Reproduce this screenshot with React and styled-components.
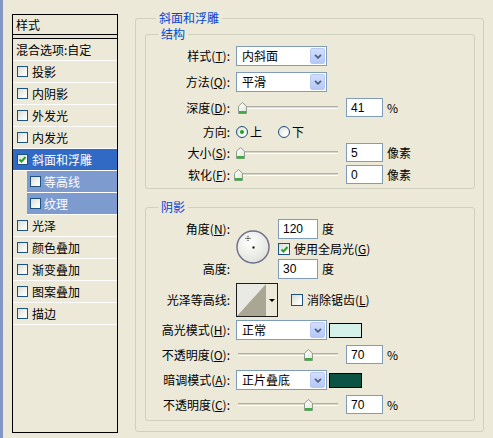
import React from "react";
import styled, { createGlobalStyle } from "styled-components";

const GlobalStyle = createGlobalStyle`
  html, body {
    margin: 0;
    padding: 0;
    background: #ECE9D8;
  }
  body {
    font-family: "Noto Sans CJK SC", "Liberation Sans", sans-serif;
    font-size: 12px;
    line-height: 14px;
    color: #000;
  }
`;

const Dialog = styled.div`
  display: flex;
  align-items: flex-start;
  width: 493px;
  height: 438px;
  box-sizing: border-box;
  border-left: 3px solid #8396C4;
  background: #ECE9D8;
  overflow: hidden;
`;

/* ---------- left style list ---------- */

const Sidebar = styled.div`
  margin: 14px 0 0 9px;
  width: 106px;
  height: 419px;
  box-sizing: border-box;
  border: 1px solid #000;
  display: flex;
  flex-direction: column;
  flex: none;
`;

const SideHeader = styled.div`
  height: 19px;
  line-height: 19px;
  padding-left: 3px;
  border-bottom: 1px solid #000;
`;

const SideGap = styled.div`
  height: 3px;
  background: #E4E1D2;
`;

const SideList = styled.div`
  flex: 1;
  border-top: 1px solid #000;
`;

const Item = styled.div`
  height: 21px;
  border-bottom: 1px solid #fff;
  display: flex;
  align-items: center;
  gap: ${p => (p.$sub ? 3 : 4)}px;
  margin-left: ${p => (p.$sub ? 14 : 0)}px;
  padding-left: ${p => (p.$sub ? 3 : p.$plain ? 3 : 4)}px;
  background: ${p => (p.$selected ? "#316AC5" : p.$sub ? "#7E9BD0" : "transparent")};
  color: ${p => (p.$selected || p.$sub ? "#fff" : "#000")};
  white-space: nowrap;
`;

const Check = styled.span`
  width: ${p => p.$size || 11}px;
  height: ${p => p.$size || 11}px;
  box-sizing: border-box;
  border: 1px solid #1C5180;
  background: linear-gradient(135deg, #DCDCD5 0%, #F4F4F0 60%, #fff 100%);
  display: inline-flex;
  align-items: center;
  justify-content: center;
  flex: none;
`;

function CheckBox({ checked, size }) {
  return (
    <Check $size={size}>
      {checked && (
        <svg width="9" height="9" viewBox="0 0 9 9">
          <polyline points="1.5,4.5 3.5,6.5 7.5,2" fill="none" stroke="#21A121" strokeWidth="2" />
        </svg>
      )}
    </Check>
  );
}

const styleItems = [
  { name: "投影" },
  { name: "内阴影" },
  { name: "外发光" },
  { name: "内发光" },
  { name: "斜面和浮雕", selected: true, checked: true },
  { name: "等高线", sub: true },
  { name: "纹理", sub: true },
  { name: "光泽" },
  { name: "颜色叠加" },
  { name: "渐变叠加" },
  { name: "图案叠加" },
  { name: "描边" },
];

/* ---------- right panel ---------- */

const Main = styled.div`
  margin: 11px 0 0 17px;
  flex: none;
`;

const Group = styled.fieldset`
  margin: ${p => p.$mt || 0}px 0 0 0;
  padding: ${p => p.$pad};
  width: ${p => p.$w}px;
  box-sizing: border-box;
  border: 1px solid #D0D0BF;
  border-radius: 3px;
  min-inline-size: 0;
`;

const Legend = styled.legend`
  margin-left: ${p => p.$ml}px;
  padding: 0 3px;
  color: #0046D5;
  font-size: 12px;
  line-height: 14px;
`;

const Row = styled.div`
  display: flex;
  align-items: center;
  height: ${p => p.$h || 19}px;
  margin-top: ${p => p.$mt || 0}px;
  white-space: nowrap;
`;

const Label = styled.span`
  width: 84px;
  flex: none;
  text-align: right;
  margin-right: 6px;
  white-space: nowrap;
`;

const Unit = styled.span`
  margin-left: 4px;
`;

const Combo = styled.div`
  width: 91px;
  height: ${p => p.$h || 20}px;
  box-sizing: border-box;
  border: 1px solid #7F9DB9;
  background: #fff;
  display: flex;
  align-items: stretch;
  padding: 1px;
  flex: none;
`;

const ComboText = styled.span`
  flex: 1;
  padding-left: 4px;
  display: flex;
  align-items: center;
`;

const DropBtn = styled.span`
  width: 15px;
  box-sizing: border-box;
  border: 1px solid #B7C9F2;
  border-radius: 2px;
  background: linear-gradient(#D2DEFD, #B5C8F7);
  display: flex;
  align-items: center;
  justify-content: center;
`;

function ComboBox({ value, h }) {
  return (
    <Combo $h={h}>
      <ComboText>{value}</ComboText>
      <DropBtn>
        <svg width="8" height="5" viewBox="0 0 8 5">
          <polyline points="1,0.8 4,3.8 7,0.8" fill="none" stroke="#4D6185" strokeWidth="1.8" />
        </svg>
      </DropBtn>
    </Combo>
  );
}

const Field = styled.span`
  width: ${p => p.$w || 37}px;
  height: ${p => p.$h || 19}px;
  box-sizing: border-box;
  border: 1px solid #7F9DB9;
  background: #fff;
  padding-left: 4px;
  display: flex;
  align-items: center;
  flex: none;
  font-family: "Liberation Sans", "Noto Sans CJK SC", sans-serif;
`;

const SliderBox = styled.div`
  position: relative;
  width: 109px;
  height: 14px;
  margin-left: -2px;
  margin-right: 3px;
  display: flex;
  align-items: center;
  flex: none;
`;

const Track = styled.div`
  flex: 1;
  margin: 0 5px 0 4px;
  height: 1px;
  border-top: 1px solid #B3B1A3;
  border-bottom: 1px solid #fff;
  background: #D8D6C8;
`;

const Thumb = styled.svg`
  position: absolute;
  top: 1px;
`;

function Slider({ pos }) {
  return (
    <SliderBox>
      <Track />
      <Thumb width="9" height="12" viewBox="0 0 9 12" style={{ left: `${pos}px` }}>
        <defs>
          <linearGradient id="thumbFill" x1="0" y1="0" x2="1" y2="1">
            <stop offset="0" stopColor="#fff" />
            <stop offset="1" stopColor="#E3E3DB" />
          </linearGradient>
        </defs>
        <path d="M0.5 11.5 V4.2 L4.5 0.5 L8.5 4.2 V11.5 Z" fill="url(#thumbFill)" stroke="#8F9C90" />
        <rect x="1" y="9" width="7" height="2.5" fill="#3DAE3D" />
      </Thumb>
    </SliderBox>
  );
}

const RadioDot = styled.span`
  width: 12px;
  height: 12px;
  box-sizing: border-box;
  border-radius: 50%;
  border: 1px solid #1C5180;
  background: radial-gradient(circle at 70% 70%, #fff 0%, #F0F0EA 50%, #D8D8D0 100%);
  display: inline-flex;
  align-items: center;
  justify-content: center;
  flex: none;
  &::after {
    content: "";
    width: 4px;
    height: 4px;
    border-radius: 50%;
    background: ${p => (p.$on ? "#21A121" : "transparent")};
  }
`;

const RadioOpt = styled.span`
  display: inline-flex;
  align-items: center;
  gap: 2px;
  margin-right: 16px;
`;

const AngleBlock = styled.div`
  display: flex;
  height: 60px;
`;

const AngleLabels = styled.div`
  width: 84px;
  display: flex;
  flex-direction: column;
  justify-content: space-between;
  text-align: right;
  flex: none;
`;

const AngleLabel = styled.span`
  height: 20px;
  line-height: 20px;
`;

const Dial = styled.svg`
  margin: 10px 0 0 5px;
  flex: none;
`;

const AngleFields = styled.div`
  margin-left: 7px;
  display: flex;
  flex-direction: column;
  justify-content: space-between;
`;

const Inline = styled.div`
  display: flex;
  align-items: center;
  gap: ${p => p.$gap || 0}px;
  white-space: nowrap;
`;

const Contour = styled.div`
  width: 42px;
  height: 34px;
  box-sizing: border-box;
  border: 1px solid #1E1E1E;
  display: flex;
  flex: none;
  background: #ECE9D8;
`;

const ContourArrow = styled.div`
  flex: 1;
  display: flex;
  align-items: center;
  justify-content: center;
  &::after {
    content: "";
    border-left: 3px solid transparent;
    border-right: 3px solid transparent;
    border-top: 3px solid #000;
  }
`;

const Swatch = styled.span`
  width: 33px;
  height: 15px;
  box-sizing: border-box;
  border: 1px solid #000;
  background: ${p => p.$color};
  margin-left: 2px;
  flex: none;
`;

function AngleDial({ angle }) {
  const rad = (angle * Math.PI) / 180;
  const cx = 18 + 10 * Math.cos(rad);
  const cy = 18 - 10 * Math.sin(rad);
  return (
    <Dial width="36" height="36" viewBox="0 0 36 36">
      <defs>
        <radialGradient id="dialFill" cx="40%" cy="35%" r="70%">
          <stop offset="0" stopColor="#fff" />
          <stop offset="1" stopColor="#E0E0DA" />
        </radialGradient>
      </defs>
      <circle cx="18" cy="18" r="16.8" fill="#D5D5DA" />
      <circle cx="18" cy="18" r="16" fill="url(#dialFill)" stroke="#6E7088" strokeWidth="1.4" />
      <rect x="17.5" y="17.5" width="2" height="2" fill="#000" />
      <line x1={cx - 2.5} y1={cy} x2={cx + 2.5} y2={cy} stroke="#000" strokeWidth="1" strokeDasharray="1 1" />
      <line x1={cx} y1={cy - 2.5} x2={cx} y2={cy + 2.5} stroke="#000" strokeWidth="1" strokeDasharray="1 1" />
    </Dial>
  );
}

export default function App() {
  return (
    <>
      <GlobalStyle />
      <Dialog>
        <Sidebar>
          <SideHeader>样式</SideHeader>
          <SideGap />
          <SideList>
            <Item $plain>混合选项:自定</Item>
            {styleItems.map(it => (
              <Item key={it.name} $selected={it.selected} $sub={it.sub}>
                <CheckBox checked={it.checked} />
                <span>{it.name}</span>
              </Item>
            ))}
          </SideList>
        </Sidebar>

        <Main>
          <Group $w={349} $pad="2px 8px 10px 9px">
            <Legend $ml={11}>斜面和浮雕</Legend>

            <Group $w={330} $pad="5px 0 4px 0">
              <Legend $ml={12}>结构</Legend>
              <Row $h={20}>
                <Label>样式(<u>T</u>):</Label>
                <ComboBox value="内斜面" />
              </Row>
              <Row $h={20} $mt={6}>
                <Label>方法(<u>Q</u>):</Label>
                <ComboBox value="平滑" />
              </Row>
              <Row $mt={6}>
                <Label>深度(<u>D</u>):</Label>
                <Slider pos={4} />
                <Field>41</Field>
                <Unit>%</Unit>
              </Row>
              <Row $h={18} $mt={6}>
                <Label>方向:</Label>
                <RadioOpt>
                  <RadioDot $on />
                  <span>上</span>
                </RadioOpt>
                <RadioOpt>
                  <RadioDot />
                  <span>下</span>
                </RadioOpt>
              </Row>
              <Row $mt={2}>
                <Label>大小(<u>S</u>):</Label>
                <Slider pos={2} />
                <Field>5</Field>
                <Unit>像素</Unit>
              </Row>
              <Row $mt={3}>
                <Label>软化(<u>F</u>):</Label>
                <Slider pos={0} />
                <Field>0</Field>
                <Unit>像素</Unit>
              </Row>
            </Group>

            <Group $w={330} $mt={11} $pad="5px 0 6px 0">
              <Legend $ml={12}>阴影</Legend>
              <AngleBlock>
                <AngleLabels>
                  <AngleLabel>角度(<u>N</u>):</AngleLabel>
                  <AngleLabel>高度:</AngleLabel>
                </AngleLabels>
                <AngleDial angle={120} />
                <AngleFields>
                  <Inline>
                    <Field $w={40} $h={20}>120</Field>
                    <Unit>度</Unit>
                  </Inline>
                  <Inline $gap={4}>
                    <CheckBox checked size={12} />
                    <span>使用全局光(<u>G</u>)</span>
                  </Inline>
                  <Inline>
                    <Field $w={40} $h={20}>30</Field>
                    <Unit>度</Unit>
                  </Inline>
                </AngleFields>
              </AngleBlock>

              <Row $h={34} $mt={4}>
                <Label>光泽等高线:</Label>
                <Contour>
                  <svg width="29" height="32" viewBox="0 0 29 32">
                    <rect width="29" height="32" fill="#EAEAE4" />
                    <polygon points="0,32 29,0 29,32" fill="#A9A693" />
                  </svg>
                  <ContourArrow />
                </Contour>
                <Inline $gap={4} style={{ marginLeft: 13 }}>
                  <CheckBox size={12} />
                  <span>消除锯齿(<u>L</u>)</span>
                </Inline>
              </Row>

              <Row $h={20} $mt={3}>
                <Label>高光模式(<u>H</u>):</Label>
                <ComboBox value="正常" />
                <Swatch $color="#D4F1EA" />
              </Row>
              <Row $mt={5}>
                <Label>不透明度(<u>O</u>):</Label>
                <Slider pos={70} />
                <Field>70</Field>
                <Unit>%</Unit>
              </Row>
              <Row $h={20} $mt={6}>
                <Label>暗调模式(<u>A</u>):</Label>
                <ComboBox value="正片叠底" />
                <Swatch $color="#0B5443" />
              </Row>
              <Row $mt={5}>
                <Label>不透明度(<u>C</u>):</Label>
                <Slider pos={70} />
                <Field>70</Field>
                <Unit>%</Unit>
              </Row>
            </Group>
          </Group>
        </Main>
      </Dialog>
    </>
  );
}
